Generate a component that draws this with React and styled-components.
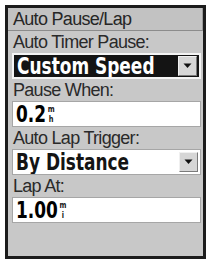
import React from 'react'
import styled, { createGlobalStyle } from 'styled-components'

const GlobalStyle = createGlobalStyle`
    html, body {
        margin: 0;
        padding: 0;
        background: #ffffff;
    }
`

function Arrow() {
    return (
        <ArrowButton>
            <svg width="9" height="6" viewBox="0 0 9 6">
                <path d="M0.5 0.5 H8.5 L4.5 5 Z" fill="#111" />
            </svg>
        </ArrowButton>
    )
}

function App() {
    return (
        <>
            <GlobalStyle />
            <Screen>
                <TitleBar>Auto Pause/Lap</TitleBar>
                <Content>
                    <Label>Auto Timer Pause:</Label>
                    <Select dark>
                        <Squeeze><Value>Custom Speed</Value></Squeeze>
                        <Arrow />
                    </Select>
                    <Label>Pause When:</Label>
                    <Field>
                        <Squeeze>
                            <Value>0.2</Value>
                            <Unit><span>m</span><span>h</span></Unit>
                        </Squeeze>
                    </Field>
                    <Label>Auto Lap Trigger:</Label>
                    <Select>
                        <Squeeze><Value>By Distance</Value></Squeeze>
                        <Arrow />
                    </Select>
                    <Label>Lap At:</Label>
                    <Field>
                        <Squeeze>
                            <Value>1.00</Value>
                            <Unit><span>m</span><span>i</span></Unit>
                        </Squeeze>
                    </Field>
                </Content>
            </Screen>
        </>
    )
}

export default App

const Screen = styled.div`
    margin: 5px 0 0 5px;
    width: 195px;
    height: 248px;
    border: 3px solid #1c1c1c;
    background: #c8c8c8;
    display: flex;
    flex-direction: column;
`
const TitleBar = styled.div`
    height: 22px;
    padding-left: 5px;
    background: #c2c2c2;
    border-bottom: 1px solid #8c8c8c;
    border-right: 1px solid #9a9a9a;
    font-family: 'Liberation Sans', sans-serif;
    font-size: 18px;
    line-height: 22px;
    letter-spacing: -0.7px;
    color: #262626;
`
const Content = styled.div`
    display: flex;
    flex-direction: column;
    padding: 0 2px 0 4px;
`
const Label = styled.div`
    height: 22px;
    padding-left: 1px;
    font-family: 'Liberation Sans', sans-serif;
    font-size: 18px;
    line-height: 22px;
    letter-spacing: -0.7px;
    color: #2a2a2a;
`
const Field = styled.div`
    height: 24px;
    display: flex;
    align-items: center;
    padding-left: 3px;
    background: #ffffff;
    border: 1px solid #a6a6a6;
    overflow: hidden;
`
const Select = styled(Field)`
    padding-right: 2px;
    background: ${p => (p.dark ? '#141414' : '#ffffff')};
    border: ${p => (p.dark ? '2px solid #f4f4f4' : '1px solid #a6a6a6')};
    height: ${p => (p.dark ? '22px' : '24px')};
    color: ${p => (p.dark ? '#ffffff' : '#141414')};
`
const Squeeze = styled.div`
    flex: 1;
    min-width: 0;
    display: flex;
    align-items: center;
    transform: scaleX(0.82);
    transform-origin: left center;
`
const Value = styled.span`
    font-family: 'DejaVu Sans Condensed', 'DejaVu Sans', sans-serif;
    font-weight: bold;
    font-size: 23px;
    line-height: 24px;
    white-space: nowrap;
`
const Unit = styled.span`
    display: flex;
    flex-direction: column;
    align-items: center;
    align-self: flex-start;
    margin: 2px 0 0 2px;
    font-family: 'DejaVu Sans Condensed', sans-serif;
    font-weight: bold;
    font-size: 9px;
    line-height: 10px;
    color: #141414;
`
const ArrowButton = styled.div`
    width: 17px;
    height: 18px;
    display: flex;
    align-items: center;
    justify-content: center;
    flex-shrink: 0;
    background: #d6d6d6;
    border: 1px solid #7a7a7a;
    border-top-color: #f0f0f0;
    border-left-color: #f0f0f0;
`
